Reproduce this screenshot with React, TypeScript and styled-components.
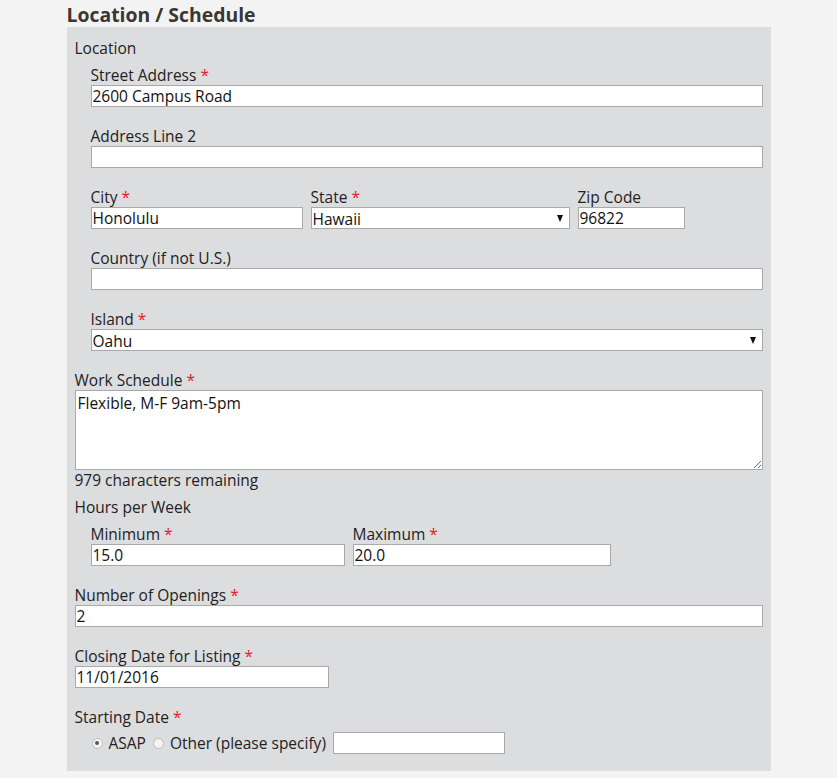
import React from "react";
import styled, { createGlobalStyle } from "styled-components";

const GlobalStyle = createGlobalStyle`
  html, body {
    margin: 0;
    padding: 0;
    background: #f3f3f3;
  }
  body {
    font-family: "Open Sans", "DejaVu Sans", sans-serif;
    font-size: 15.5px;
    color: #222;
  }
`;

const Page = styled("div")`
  width: 704px;
  margin: 0 auto;
`;

const Title = styled("h2")`
  margin: 0;
  padding-top: 3px;
  height: 24px;
  line-height: 24px;
  font-size: 19.4px;
  font-weight: bold;
  color: #3a3633;
`;

const Panel = styled("div")`
  background: #dcdddf;
  padding: 11px 8px 17px 8px;
`;

const Group = styled("div")`
  margin-bottom: 19px;
`;

const Nested = styled("div")`
  padding-left: 16px;
`;

const Row = styled("div")`
  display: flex;
  gap: 8px;
`;

const Cell = styled("div")<{ w: number }>`
  width: ${(p) => p.w}px;
  flex: none;
`;

const Label = styled("div")`
  line-height: 20px;
  height: 20px;
  white-space: nowrap;
`;

const Req = styled("span")`
  color: #e8202a;
  &::before {
    content: " ";
  }
`;

const Heading = styled("div")<{ gap?: number }>`
  line-height: 20px;
  margin-bottom: ${(p) => p.gap ?? 7}px;
`;

const Input = styled("input")<{ w?: number }>`
  display: block;
  box-sizing: border-box;
  width: ${(p) => (p.w ? `${p.w}px` : "100%")};
  height: 22px;
  margin: 0;
  padding: 0 1px;
  border: 1px solid #a9a9a9;
  background: #fff;
  font-family: "Open Sans", "DejaVu Sans", sans-serif;
  font-size: 15.5px;
  color: #111;
  outline: none;
`;

const SelectWrap = styled("div")`
  position: relative;
`;

const Select = styled("select")`
  display: block;
  box-sizing: border-box;
  width: 100%;
  height: 22px;
  margin: 0;
  padding: 0 1px;
  border: 1px solid #a9a9a9;
  border-radius: 0;
  background: #fff;
  appearance: none;
  font-family: "Open Sans", "DejaVu Sans", sans-serif;
  font-size: 15.5px;
  color: #111;
  outline: none;
`;

const Arrow = styled("span")`
  position: absolute;
  right: 7px;
  top: 8px;
  width: 0;
  height: 0;
  border-left: 3.5px solid transparent;
  border-right: 3.5px solid transparent;
  border-top: 7px solid #111;
  pointer-events: none;
`;

const TextArea = styled("textarea")`
  display: block;
  box-sizing: border-box;
  width: 100%;
  height: 80px;
  margin: 0;
  padding: 1px 2px;
  border: 1px solid #a9a9a9;
  background: #fff;
  font-family: "Open Sans", "DejaVu Sans", sans-serif;
  font-size: 15.5px;
  color: #111;
  outline: none;
`;

const Counter = styled("div")`
  line-height: 20px;
  margin-bottom: 7px;
`;

const RadioRow = styled("div")`
  display: flex;
  align-items: center;
  padding-left: 17px;
  margin-top: 5px;
  height: 22px;
`;

const Radio = styled("input")`
  appearance: none;
  box-sizing: border-box;
  width: 11px;
  height: 11px;
  margin: 0 6px 0 0;
  border: 1px solid #bdbdbd;
  border-radius: 50%;
  background: #f4f4f4;
  position: relative;
  &:checked::after {
    content: "";
    position: absolute;
    left: 2.5px;
    top: 2.5px;
    width: 4px;
    height: 4px;
    border-radius: 50%;
    background: #555;
  }
`;

const RadioText = styled("label")`
  margin-right: 7px;
  line-height: 22px;
`;

function Field({
  label,
  required,
  value,
  w,
}: {
  label: string;
  required?: boolean;
  value?: string;
  w?: number;
}) {
  return (
    <>
      <Label>
        {label}
        {required && <Req>*</Req>}
      </Label>
      <Input w={w} defaultValue={value} />
    </>
  );
}

function SelectField({ label, value }: { label: string; value: string }) {
  return (
    <>
      <Label>
        {label}
        <Req>*</Req>
      </Label>
      <SelectWrap>
        <Select defaultValue={value}>
          <option>{value}</option>
        </Select>
        <Arrow />
      </SelectWrap>
    </>
  );
}

export default function App() {
  return (
    <>
      <GlobalStyle />
      <Page>
        <Title>Location / Schedule</Title>
        <Panel>
          <Heading gap={7}>Location</Heading>
          <Nested>
            <Group>
              <Field label="Street Address" required value="2600 Campus Road" />
            </Group>
            <Group>
              <Field label="Address Line 2" />
            </Group>
            <Group>
              <Row>
                <Cell w={212}>
                  <Field label="City" required value="Honolulu" />
                </Cell>
                <Cell w={259}>
                  <SelectField label="State" value="Hawaii" />
                </Cell>
                <Cell w={107}>
                  <Field label="Zip Code" value="96822" />
                </Cell>
              </Row>
            </Group>
            <Group>
              <Field label="Country (if not U.S.)" />
            </Group>
            <Group>
              <SelectField label="Island" value="Oahu" />
            </Group>
          </Nested>

          <Label>
            Work Schedule<Req>*</Req>
          </Label>
          <TextArea defaultValue="Flexible, M-F 9am-5pm" />
          <Counter>979 characters remaining</Counter>

          <Heading gap={7}>Hours per Week</Heading>
          <Nested>
            <Group>
              <Row>
                <Cell w={254}>
                  <Field label="Minimum" required value="15.0" />
                </Cell>
                <Cell w={258}>
                  <Field label="Maximum" required value="20.0" />
                </Cell>
              </Row>
            </Group>
          </Nested>

          <Group>
            <Field label="Number of Openings" required value="2" />
          </Group>
          <Group>
            <Field label="Closing Date for Listing" required value="11/01/2016" w={254} />
          </Group>

          <Label>
            Starting Date<Req>*</Req>
          </Label>
          <RadioRow>
            <Radio type="radio" name="start" id="asap" defaultChecked />
            <RadioText htmlFor="asap">ASAP</RadioText>
            <Radio type="radio" name="start" id="other" />
            <RadioText htmlFor="other">Other (please specify)</RadioText>
            <Input w={172} />
          </RadioRow>
        </Panel>
      </Page>
    </>
  );
}
